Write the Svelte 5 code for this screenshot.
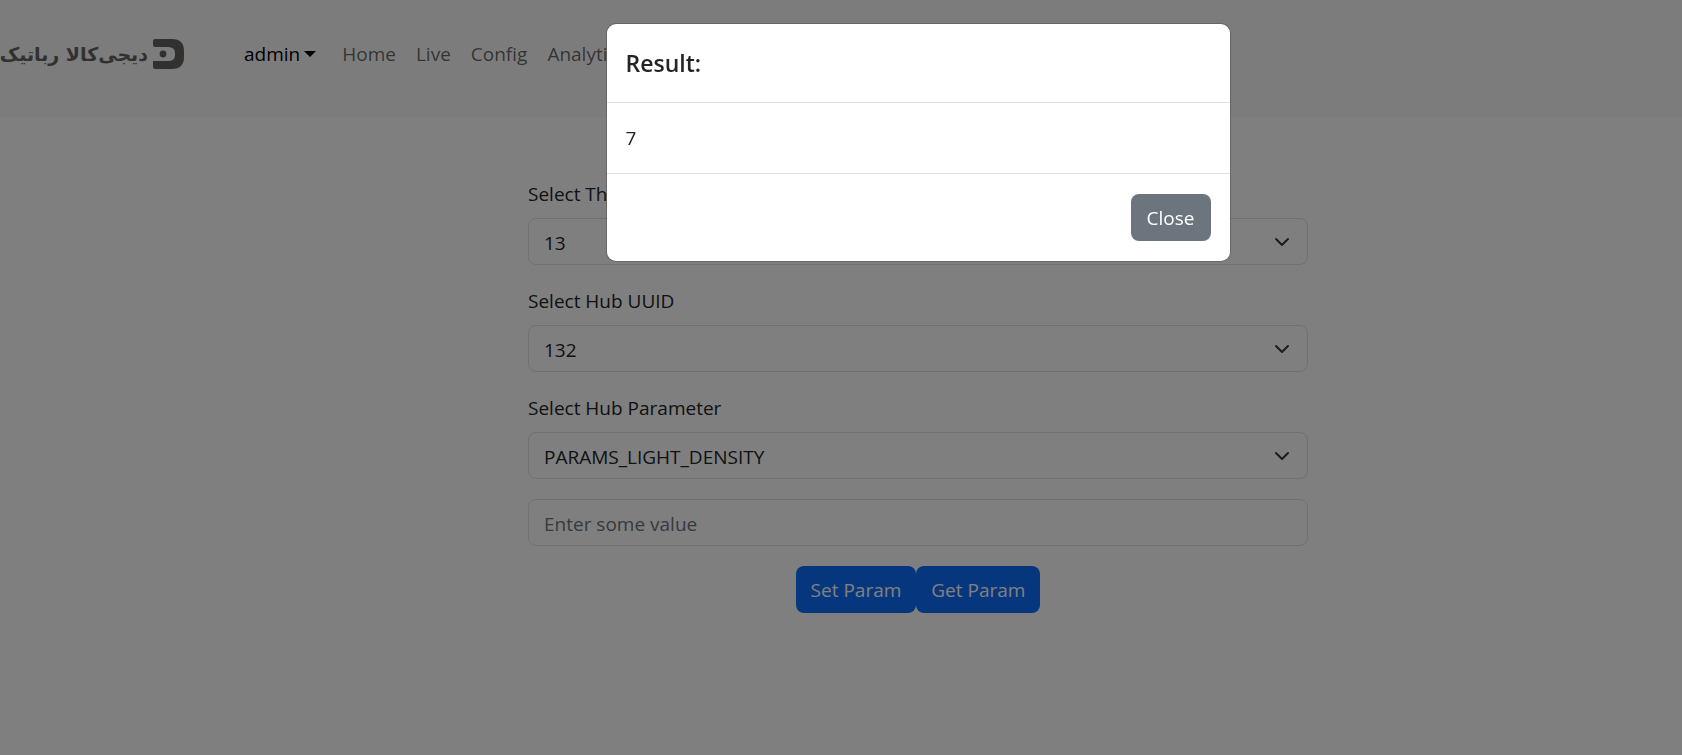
<script>
  let thing = $state('13');
  let hub = $state('132');
  let param = $state('PARAMS_LIGHT_DENSITY');
  let value = $state('');
  let open = $state(true);
</script>

<div class="page">
  <header class="navbar">
    <a class="brand" href="#top">
      <span class="wordmark" lang="fa" dir="rtl">دیجی‌کالا رباتیک</span>
      <svg width="31" height="30" viewBox="0 0 31 30" aria-hidden="true">
        <path fill="#64625f" d="M2 0H19Q31 0 31 12V18Q31 30 19 30H2Q0 30 0 28V22H15Q22 22 22 16V14Q22 8 15 8H2Q0 8 0 6V2Q0 0 2 0Z" />
        <circle cx="10" cy="15" r="3.4" fill="#64625f" />
      </svg>
    </a>
    <nav>
      <button class="user" type="button">admin<span class="caret"></span></button>
      <a href="#home">Home</a>
      <a href="#live">Live</a>
      <a href="#config">Config</a>
      <a href="#analytics">Analytics</a>
    </nav>
  </header>

  <main>
    <form onsubmit={(e) => e.preventDefault()}>
      <label for="thing">Select Thing</label>
      <select id="thing" bind:value={thing}><option>13</option></select>
      <label for="hub">Select Hub UUID</label>
      <select id="hub" bind:value={hub}><option>132</option></select>
      <label for="param">Select Hub Parameter</label>
      <select id="param" bind:value={param}><option>PARAMS_LIGHT_DENSITY</option></select>
      <input type="text" aria-label="Value" placeholder="Enter some value" bind:value />
      <div class="actions">
        <button class="btn primary" type="button">Set Param</button>
        <button class="btn primary" type="button" onclick={() => (open = true)}>Get Param</button>
      </div>
    </form>
  </main>
</div>

{#if open}
  <div class="backdrop">
    <div class="modal" role="dialog" aria-modal="true" aria-labelledby="result-title">
      <div class="modal-header"><h5 id="result-title">Result:</h5></div>
      <div class="modal-body">7</div>
      <div class="modal-footer">
        <button class="btn secondary" type="button" onclick={() => (open = false)}>Close</button>
      </div>
    </div>
  </div>
{/if}

<style>
  :global(body) {
    margin: 0;
    background: #fff;
    color: #212529;
    font: 19px/30px "Segoe UI", "Open Sans", "Noto Sans", sans-serif;
  }
  .page {
    min-height: 100vh;
    overflow: hidden;
  }
  .navbar {
    display: flex;
    gap: 60px;
    box-sizing: border-box;
    height: 117px;
    padding-top: 30px;
    background: #f8f8fb;
  }
  .brand {
    display: flex;
    justify-content: flex-end;
    align-items: center;
    gap: 5px;
    width: 184px;
    height: 48px;
    flex: none;
    color: #64625f;
    text-decoration: none;
  }
  .brand svg {
    flex: none;
  }
  .wordmark {
    font: bold 19px/30px "DejaVu Sans", sans-serif;
    white-space: nowrap;
  }
  nav {
    display: flex;
    align-items: center;
    gap: 20px;
    height: 48px;
  }
  nav a {
    color: rgba(0, 0, 0, 0.6);
    text-decoration: none;
  }
  .user {
    display: flex;
    align-items: center;
    gap: 4px;
    margin-right: 6px;
    padding: 0;
    border: 0;
    background: none;
    color: #000;
    font: inherit;
  }
  .caret {
    border: 6px solid transparent;
    border-top-color: #000;
    border-bottom: 0;
  }
  main {
    padding: 62px 0 40px 154px;
  }
  form {
    max-width: 780px;
    margin: 0 auto;
  }
  label {
    display: block;
    padding-top: 1px;
    margin-bottom: 9px;
  }
  form label:first-child {
    padding-top: 0;
  }
  select,
  input {
    display: block;
    box-sizing: border-box;
    width: 100%;
    height: 47px;
    margin: 0 0 20px;
    padding: 9px 15px 7px;
    border: 1px solid #dee2e6;
    border-radius: 8px;
    background: #fff;
    color: #212529;
    font: inherit;
  }
  select {
    appearance: none;
    background: #fff
      url("data:image/svg+xml,%3Csvg xmlns='http://www.w3.org/2000/svg' viewBox='0 0 16 16'%3E%3Cpath fill='none' stroke='%23343a40' stroke-linecap='round' stroke-linejoin='round' stroke-width='2' d='m2 5 6 6 6-6'/%3E%3C/svg%3E")
      no-repeat right 17px center / 16px 16px;
  }
  input::placeholder {
    color: #6c757d;
    opacity: 1;
  }
  .actions {
    display: flex;
    justify-content: center;
  }
  .btn {
    height: 47px;
    padding: 1px 15px 0;
    border: 0;
    border-radius: 8px;
    color: #fff;
    font: inherit;
  }
  .primary {
    background: #0d6efd;
  }
  .secondary {
    padding: 0 16px;
    background: #6c757d;
    font-weight: 500;
  }
  .backdrop {
    position: fixed;
    inset: 0;
    box-sizing: border-box;
    padding: 23px 0 24px 154px;
    background: rgba(0, 0, 0, 0.5);
  }
  .modal {
    box-sizing: border-box;
    max-width: 625px;
    margin: 0 auto;
    border: 1px solid rgba(0, 0, 0, 0.18);
    border-radius: 10px;
    background: #fff;
    background-clip: padding-box;
  }
  .modal-header {
    padding: 20px 19px;
    border-bottom: 1px solid #dee2e6;
  }
  h5 {
    margin: 0;
    font-size: 23px;
    font-weight: 600;
    line-height: 38px;
  }
  .modal-body {
    padding: 20px 19px;
  }
  .modal-footer {
    display: flex;
    justify-content: flex-end;
    padding: 20px 19px;
    border-top: 1px solid #dee2e6;
  }
</style>
